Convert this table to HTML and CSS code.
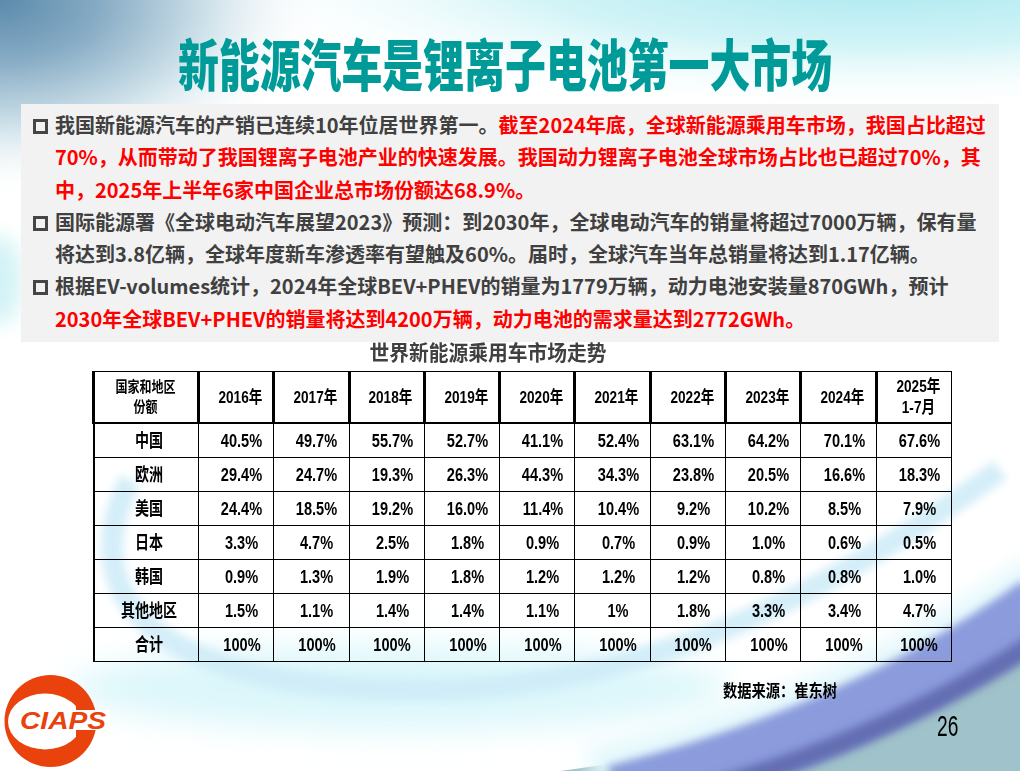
FILE: index.html
```html
<!DOCTYPE html>
<html lang="zh-CN">
<head>
<meta charset="utf-8">
<title>新能源汽车是锂离子电池第一大市场</title>
<link rel="stylesheet" href="styles.css">
</head>
<body>
<div class="slide">
  <svg class="bg" width="1020" height="771" viewBox="0 0 1020 771">
    <defs>
      <radialGradient id="gTL" gradientUnits="userSpaceOnUse" cx="0" cy="0" r="330" gradientTransform="scale(1 0.6)">
        <stop offset="0" stop-color="#5b8aac"/>
        <stop offset="0.3" stop-color="#86abc4"/>
        <stop offset="0.65" stop-color="#d2e4ec"/>
        <stop offset="1" stop-color="#ffffff" stop-opacity="0"/>
      </radialGradient>
      <radialGradient id="gTR" gradientUnits="userSpaceOnUse" cx="880" cy="-20" r="700" gradientTransform="translate(880 -20) scale(1 0.19) translate(-880 20)">
        <stop offset="0" stop-color="#a9e8f0"/>
        <stop offset="0.5" stop-color="#d2f4f7"/>
        <stop offset="1" stop-color="#ffffff" stop-opacity="0"/>
      </radialGradient>
      <filter id="b4" x="-20%" y="-20%" width="140%" height="140%"><feGaussianBlur stdDeviation="4"/></filter>
      <filter id="b10" x="-30%" y="-30%" width="160%" height="160%"><feGaussianBlur stdDeviation="10"/></filter>
      <filter id="b16" x="-30%" y="-60%" width="160%" height="220%"><feGaussianBlur stdDeviation="16"/></filter>
    </defs>
    <rect width="1020" height="771" fill="#ffffff"/>
    <rect width="1020" height="200" fill="url(#gTR)"/>
    <rect width="400" height="260" fill="url(#gTL)"/>
    <ellipse cx="0" cy="280" rx="22" ry="45" fill="#d3f3f5" filter="url(#b10)"/>
    <ellipse cx="400" cy="688" rx="330" ry="42" fill="#dcf7fb" filter="url(#b16)"/>
    <path d="M 130 480 C 70 600 160 690 420 690 C 640 690 820 600 1000 470" stroke="#cdebf8" stroke-width="22" fill="none" opacity="0.85" filter="url(#b4)"/>
    <path d="M 560 771 C 760 745 900 680 1020 590 L 1020 771 Z" fill="#a0c2ca"/>
    <path d="M 590 768 C 750 732 900 672 1040 572" stroke="#e4f8fc" stroke-width="40" fill="none" filter="url(#b10)"/>
    <path d="M 615 795 C 760 758 900 705 1040 605" stroke="#8b9bdc" stroke-width="60" fill="none" filter="url(#b4)"/>
    <path d="M 640 808 C 770 776 905 728 1040 640" stroke="#646eb2" stroke-width="20" fill="none" filter="url(#b4)"/>
  </svg>

  <div class="content">
    <h1 class="title"><span>新能源汽车是锂离子电池第一大市场</span></h1>

    <div class="box">
      <div class="item">
        <i class="sq"></i>
        <p class="txt">我国新能源汽车的产销已连续10年位居世界第一。<span class="red">截至2024年底，全球新能源乘用车市场，我国占比超过<br>70%，从而带动了我国锂离子电池产业的快速发展。我国动力锂离子电池全球市场占比也已超过70%，其<br>中，2025年上半年6家中国企业总市场份额达68.9%。</span></p>
      </div>
      <div class="item">
        <i class="sq"></i>
        <p class="txt">国际能源署《全球电动汽车展望2023》预测：到2030年，全球电动汽车的销量将超过7000万辆，保有量<br>将达到3.8亿辆，全球年度新车渗透率有望触及60%。届时，全球汽车当年总销量将达到1.17亿辆。</p>
      </div>
      <div class="item">
        <i class="sq"></i>
        <p class="txt">根据EV-volumes统计，2024年全球BEV+PHEV的销量为1779万辆，动力电池安装量870GWh，预计<br><span class="red">2030年全球BEV+PHEV的销量将达到4200万辆，动力电池的需求量达到2772GWh。</span></p>
      </div>
    </div>

    <div class="caption"><span>世界新能源乘用车市场走势</span></div>

    <table class="data">
      <colgroup>
        <col class="c-first"><col><col><col><col><col><col><col><col><col><col>
      </colgroup>
      <thead>
        <tr>
          <th class="lbl"><span>国家和地区<br>份额</span></th>
          <th><span>2016年</span></th>
          <th><span>2017年</span></th>
          <th><span>2018年</span></th>
          <th><span>2019年</span></th>
          <th><span>2020年</span></th>
          <th><span>2021年</span></th>
          <th><span>2022年</span></th>
          <th><span>2023年</span></th>
          <th><span>2024年</span></th>
          <th class="last"><span>2025年<br>1-7月</span></th>
        </tr>
      </thead>
      <tbody>
        <tr><td class="lbl"><span>中国</span></td><td><span>40.5%</span></td><td><span>49.7%</span></td><td><span>55.7%</span></td><td><span>52.7%</span></td><td><span>41.1%</span></td><td><span>52.4%</span></td><td><span>63.1%</span></td><td><span>64.2%</span></td><td><span>70.1%</span></td><td><span>67.6%</span></td></tr>
        <tr><td class="lbl"><span>欧洲</span></td><td><span>29.4%</span></td><td><span>24.7%</span></td><td><span>19.3%</span></td><td><span>26.3%</span></td><td><span>44.3%</span></td><td><span>34.3%</span></td><td><span>23.8%</span></td><td><span>20.5%</span></td><td><span>16.6%</span></td><td><span>18.3%</span></td></tr>
        <tr><td class="lbl"><span>美国</span></td><td><span>24.4%</span></td><td><span>18.5%</span></td><td><span>19.2%</span></td><td><span>16.0%</span></td><td><span>11.4%</span></td><td><span>10.4%</span></td><td><span>9.2%</span></td><td><span>10.2%</span></td><td><span>8.5%</span></td><td><span>7.9%</span></td></tr>
        <tr><td class="lbl"><span>日本</span></td><td><span>3.3%</span></td><td><span>4.7%</span></td><td><span>2.5%</span></td><td><span>1.8%</span></td><td><span>0.9%</span></td><td><span>0.7%</span></td><td><span>0.9%</span></td><td><span>1.0%</span></td><td><span>0.6%</span></td><td><span>0.5%</span></td></tr>
        <tr><td class="lbl"><span>韩国</span></td><td><span>0.9%</span></td><td><span>1.3%</span></td><td><span>1.9%</span></td><td><span>1.8%</span></td><td><span>1.2%</span></td><td><span>1.2%</span></td><td><span>1.2%</span></td><td><span>0.8%</span></td><td><span>0.8%</span></td><td><span>1.0%</span></td></tr>
        <tr><td class="lbl"><span>其他地区</span></td><td><span>1.5%</span></td><td><span>1.1%</span></td><td><span>1.4%</span></td><td><span>1.4%</span></td><td><span>1.1%</span></td><td><span>1%</span></td><td><span>1.8%</span></td><td><span>3.3%</span></td><td><span>3.4%</span></td><td><span>4.7%</span></td></tr>
        <tr><td class="lbl"><span>合计</span></td><td><span>100%</span></td><td><span>100%</span></td><td><span>100%</span></td><td><span>100%</span></td><td><span>100%</span></td><td><span>100%</span></td><td><span>100%</span></td><td><span>100%</span></td><td><span>100%</span></td><td><span>100%</span></td></tr>
      </tbody>
    </table>

    <div class="footer">
      <svg class="logo" width="112" height="99" viewBox="0 0 112 99">
        <defs>
          <clipPath id="cutR"><rect x="0" y="0" width="76" height="99"/></clipPath>
        </defs>
        <circle cx="50.5" cy="49" r="46" fill="#e9420d"/>
        <ellipse cx="45" cy="49.5" rx="37" ry="28" fill="#ffffff" clip-path="url(#cutR)"/>
        <rect x="14" y="38" width="96" height="20" fill="#ffffff"/>
        <text x="20" y="56.5" textLength="86" lengthAdjust="spacingAndGlyphs" font-family="Liberation Sans, Arial, sans-serif" font-weight="bold" font-style="italic" font-size="23" fill="#e9420d">CIAPS</text>
      </svg>
      <div class="notes">
        <div class="src"><span>数据来源：崔东树</span></div>
        <div class="pg"><span>26</span></div>
      </div>
    </div>
  </div>
</div>
</body>
</html>
```

FILE: styles.css
```css
html, body {
  margin: 0;
  padding: 0;
}

.slide {
  position: relative;
  width: 1020px;
  height: 771px;
  overflow: hidden;
  background: #ffffff;
  font-family: "Noto Sans CJK SC", "Liberation Sans", sans-serif;
}

.bg {
  position: absolute;
  left: 0;
  top: 0;
  z-index: 0;
}

.content {
  position: relative;
  z-index: 1;
  display: flex;
  flex-direction: column;
  height: 771px;
}

.title {
  margin: 0;
  padding: 32px 10px 0 0;
  height: 60px;
  line-height: 60px;
  font-size: 56px;
  font-weight: 900;
  color: #009b98;
  text-align: center;
  white-space: nowrap;
}

.title span {
  display: inline-block;
  transform: scaleX(0.73);
}

.box {
  margin: 12px 0 0 21px;
  width: 978px;
  height: 240px;
  box-sizing: border-box;
  padding: 5px 0 0 12px;
  background: #f2f2f2;
}

.item {
  display: flex;
  align-items: flex-start;
}

.sq {
  flex: none;
  width: 15px;
  height: 15px;
  box-sizing: border-box;
  border: 3px solid #454545;
  margin: 10px 7px 0 0;
}

.txt {
  margin: 0;
  font-size: 20px;
  line-height: 32.3px;
  font-weight: 700;
  color: #404040;
  white-space: nowrap;
}

.red {
  color: #ff0000;
}

.caption {
  margin: 0 0 0 362px;
  height: 18px;
  line-height: 18px;
  font-size: 21px;
  font-weight: 700;
  color: #404040;
  white-space: nowrap;
}

.caption span {
  display: inline-block;
  transform: scaleX(0.94);
}

.data {
  margin: 11px 0 0 92px;
  width: 860px;
  table-layout: fixed;
  border-collapse: collapse;
  font-family: "Liberation Sans", "Noto Sans CJK SC", sans-serif;
  font-weight: 700;
  color: #000000;
}

.c-first {
  width: 105px;
}

.data th {
  height: 50px;
  padding: 0 0 0 8px;
  font-size: 17px;
  line-height: 21px;
  font-weight: 700;
  text-align: center;
  vertical-align: middle;
  border: 1px solid #000000;
  border-left-width: 3px;
  border-right-width: 3px;
  border-bottom-width: 2px;
}

.data th.lbl {
  padding: 0;
  font-size: 15px;
  line-height: 20px;
}

.data th.last {
  border-right-width: 1px;
}

.data th span {
  display: inline-block;
  transform: scaleX(0.8);
  white-space: nowrap;
}

.data th.lbl span {
  transform: scaleX(0.8);
}

.data td {
  height: 33px;
  padding: 0 0 0 11px;
  font-size: 18px;
  line-height: 20px;
  text-align: center;
  vertical-align: middle;
  border: 1px solid #000000;
}

.data td.lbl {
  padding-left: 6px;
  border-left-width: 2px;
}

.data td span {
  display: inline-block;
  transform: scaleX(0.81);
  white-space: nowrap;
}

.data td.lbl span {
  transform: scaleX(0.78);
}

.footer {
  display: flex;
  flex: 1;
}

.logo {
  flex: none;
  margin-top: 10px;
}

.notes {
  display: flex;
  flex-direction: column;
}

.src {
  margin: 18px 0 0 600px;
  height: 20px;
  line-height: 20px;
  font-size: 17px;
  font-weight: 700;
  color: #000000;
  white-space: nowrap;
}

.src span {
  display: inline-block;
  transform: scaleX(0.84);
}

.pg {
  margin: 11px 0 0 819px;
  height: 30px;
  line-height: 30px;
  font-family: "Liberation Sans", sans-serif;
  font-size: 30px;
  color: #000000;
}

.pg span {
  display: inline-block;
  transform: scaleX(0.64);
}
```
